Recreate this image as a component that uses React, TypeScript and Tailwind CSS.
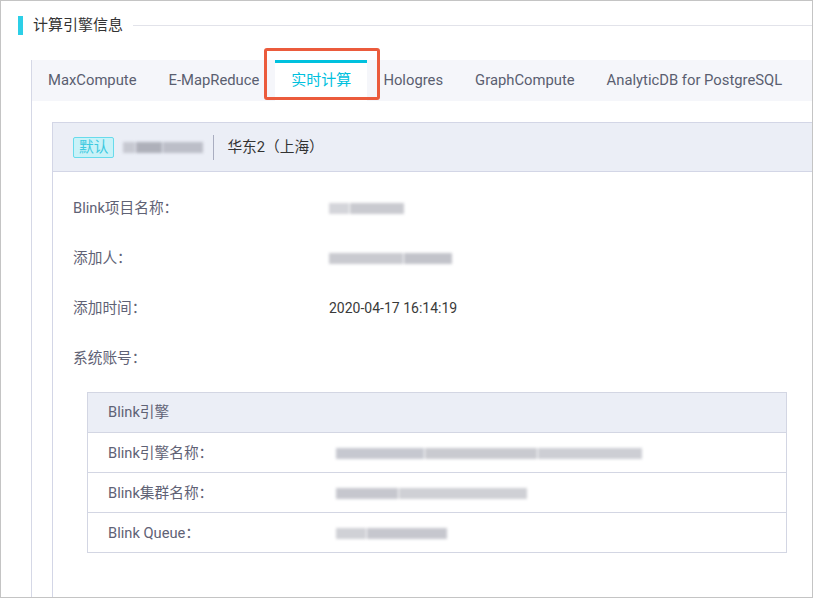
import React from 'react';

const FONT = 'font-[Roboto,"Noto_Sans_CJK_SC",sans-serif]';

const tabs = ['MaxCompute', 'E-MapReduce', '实时计算', 'Hologres', 'GraphCompute', 'AnalyticDB for PostgreSQL'];

// mosaic-ish blurred placeholder for masked values
const Masked = ({ segs }: { segs: string[] }) => (
  <div className="flex items-center gap-px blur-[1.6px]">
    {segs.map((s, i) => (
      <span key={i} className={`block h-[11px] ${s}`} />
    ))}
  </div>
);

const InfoRow = ({ label, children }: { label: string; children?: React.ReactNode }) => (
  <div className="flex h-[50px] items-center pl-5">
    <div className="w-[256px] text-[14.7px] text-[#5f6275]">{label}</div>
    <div className="text-[14px] text-[#3a3a3a]">{children}</div>
  </div>
);

const EngineRow = ({ label, children }: { label: string; children?: React.ReactNode }) => (
  <div className="flex h-[40px] items-center border-t border-[#d3d6e3] pl-5 pt-px">
    <div className="w-[228px] text-[14.7px] text-[#5f6275]">{label}</div>
    <div>{children}</div>
  </div>
);

export default function App() {
  return (
    <div className={`relative h-[598px] w-[813px] overflow-hidden border border-[#c4c4c4] bg-white ${FONT}`}>
      {/* section title */}
      <div className="mt-[15px] flex h-[19px] items-center">
        <span className="ml-[17px] h-[19px] w-[5px] bg-[#2ccfe7]" />
        <span className="ml-[10px] text-[15px] text-[#333]">计算引擎信息</span>
        <span className="ml-[10px] h-px flex-1 bg-[#e2e3ea]" />
      </div>

      <div className="ml-[30px] mt-[25px] h-[600px] border-l border-[#d5d8e6]">
        {/* tabs */}
        <div className="flex h-[41px] bg-[#f5f6fa]">
          {tabs.map((t) =>
            t === '实时计算' ? (
              <div
                key={t}
                className="flex items-center border-t-[3px] border-[#00c1de] bg-white px-4 pb-[3px] text-[15px] text-[#00c1de]"
              >
                {t}
              </div>
            ) : (
              <div key={t} className="flex items-center whitespace-nowrap px-4 text-[14.8px] text-[#5a5e70]">
                {t}
              </div>
            )
          )}
        </div>

        {/* engine card */}
        <div className="ml-5 mt-[21px] w-[770px] border border-[#d3d6e6]">
          <div className="flex h-[49px] items-center border-b border-[#d3d6e6] bg-[#ebeef6] pl-5">
            <span className="rounded-[2px] border border-[#67dbec] bg-[#c9f2f8] px-[5px] text-[14.7px] leading-[19px] text-[#3cc9e0]">
              默认
            </span>
            <div className="ml-[9px]">
              <Masked segs={['w-[12px] bg-[#c6c8d1]', 'w-[26px] bg-[#aeb0ba]', 'w-[40px] bg-[#bcbec8]']} />
            </div>
            <span className="ml-[10px] h-[25px] w-px bg-[#a9adc0]" />
            <span className="ml-[13px] text-[14.7px] text-[#333]">华东2（上海）</span>
          </div>

          <div className="pt-[11px]">
            <InfoRow label="Blink项目名称：">
              <Masked segs={['w-[20px] bg-[#d4d5da]', 'w-[54px] bg-[#c9cad0]']} />
            </InfoRow>
            <InfoRow label="添加人：">
              <Masked segs={['w-[74px] bg-[#c9cad0]', 'w-[48px] bg-[#c2c3ca]']} />
            </InfoRow>
            <InfoRow label="添加时间：">2020-04-17 16:14:19</InfoRow>
            <InfoRow label="系统账号：" />

            <div className="mb-[80px] ml-[34px] mt-[9px] w-[700px] border border-t-0 border-[#d3d6e3]">
              <div className="flex h-[40px] items-center border-t border-[#d3d6e3] bg-[#ebeef6] pl-5 text-[14.7px] text-[#5f6275]">
                Blink引擎
              </div>
              <EngineRow label="Blink引擎名称：">
                <Masked segs={['w-[88px] bg-[#c6c8d0]', 'w-[112px] bg-[#c9cad0]', 'w-[104px] bg-[#cdced4]']} />
              </EngineRow>
              <EngineRow label="Blink集群名称：">
                <Masked segs={['w-[62px] bg-[#c6c7ce]', 'w-[128px] bg-[#cfd0d5]']} />
              </EngineRow>
              <EngineRow label="Blink Queue：">
                <Masked segs={['w-[30px] bg-[#d0d1d6]', 'w-[80px] bg-[#c6c7ce]']} />
              </EngineRow>
            </div>
          </div>
        </div>
      </div>

      {/* highlight annotation */}
      <div className="absolute left-[263px] top-[47px] h-[52px] w-[116px] rounded-[3px] border-[3px] border-[#eb5b3c]" />
    </div>
  );
}
